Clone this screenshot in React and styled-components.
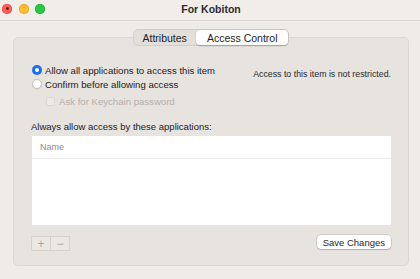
import styled, { createGlobalStyle } from 'styled-components';

const Global = createGlobalStyle`
  html, body { margin: 0; padding: 0; }
  body {
    width: 420px;
    height: 279px;
    overflow: hidden;
    background: #efebe7;
    font-family: "Liberation Sans", Arial, sans-serif;
    color: #262626;
  }
`;

const App = () => {
  return (
    <>
      <Global />
      <Window>
        <TitleBar>
          <Lights>
            <Light color="#fe5f57" border="#e0443e"><CloseDot /></Light>
            <Light color="#febc2e" border="#dea123" />
            <Light color="#28c840" border="#1aab29" />
          </Lights>
          <Title>For Kobiton</Title>
          <span />
        </TitleBar>
        <Body>
          <Tabs>
            <Tab>Attributes</Tab>
            <Tab active>Access Control</Tab>
          </Tabs>
          <Box>
            <TopRow>
              <Options>
                <OptionRow>
                  <Radio checked />
                  <Label>Allow all applications to access this item</Label>
                </OptionRow>
                <OptionRow>
                  <Radio />
                  <Label>Confirm before allowing access</Label>
                </OptionRow>
                <OptionRow indent>
                  <Check />
                  <Label disabled>Ask for Keychain password</Label>
                </OptionRow>
              </Options>
              <Note>Access to this item is not restricted.</Note>
            </TopRow>
            <ListLabel>Always allow access by these applications:</ListLabel>
            <Table>
              <TableHead>Name</TableHead>
            </Table>
            <BottomRow>
              <PlusMinus>
                <SmallBtn>+</SmallBtn>
                <SmallBtn>−</SmallBtn>
              </PlusMinus>
              <SaveButton>Save Changes</SaveButton>
            </BottomRow>
          </Box>
        </Body>
      </Window>
    </>
  );
};

const Window = styled.div`
  width: 420px;
  height: 279px;
  display: flex;
  flex-direction: column;
`;

const TitleBar = styled.div`
  height: 20px;
  flex: none;
  display: grid;
  grid-template-columns: 1fr auto 1fr;
  align-items: center;
  padding: 0 0 0 2px;
  border-bottom: 1px solid #dcd8d4;
  background: #f1eeea;
`;

const Lights = styled.div`
  display: flex;
  gap: 6.5px;
  align-items: center;
  margin-top: -3px;
`;

const Light = styled.span`
  width: 10px;
  height: 10px;
  border-radius: 50%;
  background: ${p => p.color};
  box-shadow: inset 0 0 0 0.5px ${p => p.border};
  display: flex;
  align-items: center;
  justify-content: center;
`;

const CloseDot = styled.span`
  width: 3px;
  height: 3px;
  border-radius: 50%;
  background: #7a1a14;
`;

const Title = styled.div`
  font-size: 10.5px;
  font-weight: bold;
  color: #2b2b2b;
  margin-top: -2px;
`;

const Body = styled.div`
  flex: 1;
  display: flex;
  flex-direction: column;
  padding: 8px 11px 13px 13px;
`;

const Tabs = styled.div`
  align-self: center;
  display: flex;
  height: 15px;
  margin-bottom: -9px;
  position: relative;
  z-index: 1;
  background: #e3dfdb;
  border: 1px solid #d2cec9;
  border-radius: 5px;
`;

const Tab = styled.div`
  display: flex;
  align-items: center;
  padding: 0 ${p => (p.active ? '11px' : '9px')};
  font-size: 10.5px;
  color: #1e1e1e;
  border-radius: 4px;
  background: ${p => (p.active ? '#ffffff' : 'transparent')};
  box-shadow: ${p => (p.active ? '0 0.5px 1.5px rgba(0,0,0,0.25)' : 'none')};
`;

const Box = styled.div`
  flex: 1;
  display: flex;
  flex-direction: column;
  background: #e7e3df;
  border: 1px solid #dbd7d3;
  border-radius: 5px;
  padding: 25px 17px 14px 18px;
`;

const TopRow = styled.div`
  display: flex;
  justify-content: space-between;
  align-items: flex-start;
`;

const Options = styled.div`
  display: flex;
  flex-direction: column;
`;

const OptionRow = styled.div`
  display: flex;
  align-items: center;
  gap: 3px;
  height: 14px;
  margin-left: ${p => (p.indent ? '14px' : '0')};
  margin-top: ${p => (p.indent ? '3px' : '0')};
`;

const Radio = styled.span`
  width: 10px;
  height: 10px;
  border-radius: 50%;
  box-sizing: border-box;
  flex: none;
  background: ${p => (p.checked ? '#1c6ef2' : '#ffffff')};
  border: ${p => (p.checked ? 'none' : '0.5px solid #c3bfbb')};
  box-shadow: ${p => (p.checked ? 'inset 0 0 0 3px #1c6ef2, inset 0 0 0 10px #fff' : '0 0.5px 1px rgba(0,0,0,0.1)')};
`;

const Check = styled.span`
  width: 9px;
  height: 9px;
  flex: none;
  border-radius: 2px;
  background: #ece9e6;
  border: 1px solid #dcd8d4;
  box-sizing: border-box;
  margin-right: 1px;
`;

const Label = styled.span`
  font-size: 9.6px;
  color: ${p => (p.disabled ? '#b4b0ac' : '#222')};
  white-space: nowrap;
`;

const Note = styled.div`
  font-size: 8.8px;
  color: #2a2a2a;
  margin-top: 6px;
  white-space: nowrap;
`;

const ListLabel = styled.div`
  font-size: 9.5px;
  color: #222;
  margin-top: 13px;
  margin-left: -1px;
`;

const Table = styled.div`
  margin-top: 4px;
  height: 89px;
  background: #ffffff;
  display: flex;
  flex-direction: column;
`;

const TableHead = styled.div`
  height: 22px;
  display: flex;
  align-items: center;
  padding-left: 8px;
  font-size: 9px;
  color: #8c8c8c;
  border-bottom: 1px solid #ececec;
`;

const BottomRow = styled.div`
  display: flex;
  justify-content: space-between;
  align-items: flex-start;
  margin-top: 10px;
`;

const PlusMinus = styled.div`
  display: flex;
  margin: 1px 0 0 -1px;
  border: 1px solid #d5d1cd;
  background: #ebe8e4;
`;

const SmallBtn = styled.div`
  width: 18px;
  height: 13px;
  display: flex;
  align-items: center;
  justify-content: center;
  font-size: 12px;
  color: #a9a5a1;
  & + & { border-left: 1px solid #d5d1cd; }
`;

const SaveButton = styled.div`
  height: 14px;
  padding: 0 6px;
  display: flex;
  align-items: center;
  font-size: 9.5px;
  color: #1f1f1f;
  background: #ffffff;
  border-radius: 4px;
  box-shadow: 0 0 0 0.5px rgba(0,0,0,0.2), 0 1px 1px rgba(0,0,0,0.15);
`;

export default App;
